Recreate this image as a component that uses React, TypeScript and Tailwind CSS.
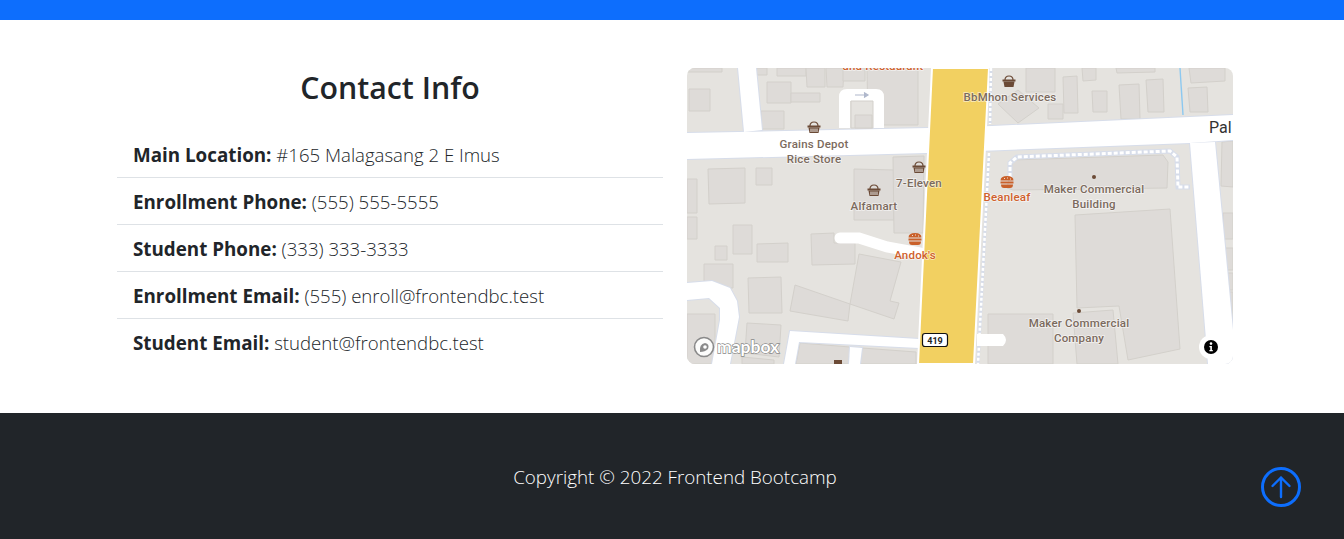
const contactRows = [
  { label: 'Main Location:', value: '#165 Malagasang 2 E Imus' },
  { label: 'Enrollment Phone:', value: '(555) 555-5555' },
  { label: 'Student Phone:', value: '(333) 333-3333' },
  { label: 'Enrollment Email:', value: '(555) enroll@frontendbc.test' },
  { label: 'Student Email:', value: 'student@frontendbc.test' },
];

// building footprints, in map pixels
const buildings = [
  '0,0 35,0 35,4 0,4', '2,21 23,21 23,43 2,43', '74,43 97,43 97,61 74,61', '80,14 104,14 104,35 80,35',
  '104,25 133,25 133,34 104,34', '69,0 80,0 80,7 70,7', '90,0 119,0 119,8 90,8', '119,0 138,0 138,19 120,19',
  '139,0 157,0 156,19 140,19', '156,0 178,0 178,13 156,13', '180,0 231,0 231,57 181,57',
  '21,101 58,100 58,135 22,136', '69,100 85,100 85,117 69,117', '0,111 10,111 10,145 0,145', '167,101 207,102 207,152 167,152',
  '206,89 237,88 236,165 207,165', '0,149 10,149 10,171 0,171', '46,157 65,157 65,186 46,186', '28,178 40,178 40,192 28,192',
  '70,176 101,175 101,194 70,194', '17,196 46,196 46,220 17,220', '61,210 94,209 95,245 62,245',
  '124,166 147,165 147,175 168,175 168,196 125,197', '172,186 214,194 203,233 212,235 207,251 163,236',
  '108,217 163,236 161,253 103,243', '0,246 28,246 28,296 0,296', '60,255 94,257 92,289 58,285', '55,289 87,292 87,296 55,296',
  '113,275 163,279 162,296 109,296', '175,280 229,284 229,296 173,296', '339,0 368,0 368,24 339,24', '376,9 390,8 391,45 377,45',
  '361,36 376,36 376,51 361,51', '405,23 420,23 420,44 406,44', '395,0 409,0 409,12 396,13', '429,0 468,0 468,4 430,5',
  '432,17 452,16 453,51 434,51', '459,12 476,11 477,44 461,44', '501,20 520,19 521,44 503,44', '502,0 538,0 538,13 504,15',
  '311,36 331,22 352,40 331,55', '326,92 476,87 481,94 480,120 326,122 320,120',
  '388,147 483,141 493,281 441,292 432,238 390,240', '301,246 366,246 366,296 301,296', '386,245 426,242 431,296 390,296',
  '535,74 546,73 546,119 534,118', '536,145 546,145 546,171 536,171', '538,180 546,180 546,202 538,202',
  '540,205 546,205 546,222 540,222', '542,224 546,224 546,257 542,257',
];

// road surfaces, in map pixels
const roads = [
  '51,0 69,0 75,62 57,64',
  '0,65 241,60 305,58 546,47 546,72 503,75 240,85 0,91',
  '503,75 528,74 546,262 546,296 521,296',
  '0,215 25,213 43,220 50,233 52,249 43,296 25,296 33,252 33,240 22,230 0,232',
  '97,296 103,263 232,271 232,280 112,274 108,296',
  '163,279 175,280 173,296 162,296',
];

const baskets: [number, number][] = [[127, 60], [232, 100], [187, 123]];
const burgers: [number, number][] = [[320, 114], [228, 171]];
const dots: [number, number][] = [[407, 109], [392, 243]];

const labels: [string, number, number, string][] = [
  ['and Restaurant', 196, 2, '#d0602c'],
  ['Grains Depot', 127, 80, '#7b6a5d'],
  ['Rice Store', 127, 95, '#7b6a5d'],
  ['7-Eleven', 232, 119, '#7b6a5d'],
  ['Alfamart', 187, 142, '#7b6a5d'],
  ['BbMhon Services', 323, 33, '#7b6a5d'],
  ['Beanleaf', 320, 133, '#d0602c'],
  ["Andok's", 228, 191, '#d0602c'],
  ['Maker Commercial', 407, 125, '#7b6a5d'],
  ['Building', 407, 140, '#7b6a5d'],
  ['Maker Commercial', 392, 259, '#7b6a5d'],
  ['Company', 392, 274, '#7b6a5d'],
];

function Basket({ x, y, solid }: { x: number; y: number; solid?: boolean }) {
  return (
    <g transform={`translate(${x} ${y})`}>
      <path d="M-4 -2 Q-4 -6 0 -6 Q4 -6 4 -2" fill="none" stroke="#6b4a36" strokeWidth="1.2" />
      <path d="M-6.5 -2.5 H6.5 V-0.5 H-6.5 Z" fill="#6b4a36" />
      <path d="M-5.5 -0.5 H5.5 L4.5 5 H-4.5 Z" fill="#6b4a36" />
      {!solid && <path d="M-3 0.5 V4 M-1 0.5 V4 M1 0.5 V4 M3 0.5 V4" stroke="#fff" strokeWidth="0.9" />}
    </g>
  );
}

function Burger({ x, y }: { x: number; y: number }) {
  return (
    <g transform={`translate(${x} ${y})`}>
      <path d="M-6.5 -1.5 Q-6.5 -6 0 -6 Q6.5 -6 6.5 -1.5 Z" fill="#c9602a" />
      <path d="M-6.5 -0.5 H6.5 V1.5 H-6.5 Z" fill="#c9602a" />
      <path d="M-6 2.5 H6 Q6 6 3 6 H-3 Q-6 6 -6 2.5 Z" fill="#c9602a" />
      <path d="M-3 -3.5 H-2 M0 -4 H1 M3 -3 H4" stroke="#fff" strokeWidth="0.8" />
    </g>
  );
}

function MapView() {
  return (
    <svg viewBox="0 0 546 296" className="block h-[296px] w-full rounded-lg">
      <rect width="546" height="296" fill="#e5e3df" />
      {buildings.map(points => (
        <polygon key={points} points={points} fill="#dedbd8" stroke="#d3d0cb" strokeWidth="1" />
      ))}
      {/* road casing first, surfaces on top so junctions stay clean */}
      {roads.map(points => (
        <polygon key={points} points={points} fill="#d7ddea" stroke="#d7ddea" strokeWidth="2" />
      ))}
      {roads.map(points => (
        <polygon key={`s-${points}`} points={points} fill="#fff" />
      ))}
      <path d="M152 60 V29 Q152 21 160 21 H189 Q197 21 197 29 V60 H186 V33 H163 V60 Z" fill="#fff" />
      <polygon points="164,33 186,33 186,60 164,60" fill="#e5e3df" stroke="#d3d0cb" />
      <polygon points="168,47 185,47 185,60 168,60" fill="#dedbd8" stroke="#d3d0cb" />
      <path d="M168 27 H179 M177 24.5 L181 27 L177 29.5" fill="#b0b8cc" stroke="#b0b8cc" strokeWidth="1.2" />
      <path d="M153 170 H172 L200 179 L233 185" fill="none" stroke="#fff" strokeWidth="11" strokeLinecap="round" />
      {/* footpath */}
      <path d="M323 109 V95 L330 89 L483 83 L490 89 L491 119 H503" fill="none" stroke="#d7ddea" strokeWidth="5" />
      <path d="M323 109 V95 L330 89 L483 83 L490 89 L491 119 H503" fill="none" stroke="#fff" strokeWidth="3" strokeDasharray="4 2" />
      <path d="M493 0 L496 47" stroke="#8cc8f0" strokeWidth="1.4" />
      {/* highway */}
      <polygon points="245,0 302,0 287,296 231,296" fill="#f2d061" stroke="#fff" strokeWidth="2" />
      <path d="M304 0 L303 56 M302 85 L291 296" stroke="#d7ddea" strokeWidth="3" />
      <path d="M304 0 L303 56 M302 85 L291 296" stroke="#fff" strokeWidth="2.5" strokeDasharray="3 2" />
      <path d="M290 266 H316 Q322 272 316 278 H290 Z" fill="#fff" />
      <rect x="235.5" y="265.5" width="25" height="13" rx="2.5" fill="#fff" stroke="#111" strokeWidth="1.2" />
      <text x="248" y="275.5" textAnchor="middle" fontSize="9" fontWeight="700" fill="#222" fontFamily="Roboto, sans-serif">419</text>
      {baskets.map(([x, y]) => <Basket key={x} x={x} y={y} />)}
      <Basket x={322} y={14} solid />
      {burgers.map(([x, y]) => <Burger key={x} x={x} y={y} />)}
      {dots.map(([x, y]) => <circle key={x} cx={x} cy={y} r="2" fill="#6b4a36" />)}
      <rect x="147" y="292" width="8" height="4" fill="#6b4a36" />
      {labels.map(([text, x, y, color]) => (
        <text
          key={`${text}-${x}`}
          x={x}
          y={y}
          textAnchor="middle"
          fontSize="11.5"
          fontWeight="500"
          letterSpacing="0.2"
          fill={color}
          stroke="#fff"
          strokeOpacity="0.6"
          strokeWidth="1.5"
          paintOrder="stroke"
          fontFamily="Roboto, sans-serif"
        >
          {text}
        </text>
      ))}
      <text x="522" y="65" fontSize="16" fill="#333" fontFamily="Roboto, sans-serif" stroke="#fff" strokeWidth="1.5" paintOrder="stroke">Pal</text>
      {/* mapbox mark */}
      <circle cx="17" cy="279" r="9.5" fill="#fff" fillOpacity="0.9" stroke="#8a8a8a" strokeWidth="1.6" />
      <path d="M13 284 Q12 276 18 275 Q23 276 21 281 Q18 284 13 284 Z" fill="#8a8a8a" />
      <circle cx="18" cy="279" r="1.8" fill="#fff" />
      <text x="30" y="285" fontSize="17.5" fontWeight="700" fill="#fff" stroke="#8a8a8a" strokeWidth="1.4" paintOrder="stroke" fontFamily="Lato, sans-serif">mapbox</text>
      {/* attribution button */}
      <circle cx="524" cy="279" r="12" fill="#fff" />
      <circle cx="524" cy="279" r="7" fill="#000" />
      <circle cx="524" cy="275.6" r="1.3" fill="#fff" />
      <path d="M522.4 278 H524.9 V282 H525.8 V283.2 H522.4 V282 H523.3 V279.2 H522.4 Z" fill="#fff" />
    </svg>
  );
}

export default function App() {
  return (
    <div className="relative h-[539px] overflow-hidden bg-white font-['Open_Sans',sans-serif] text-[#212529]">
      <div className="h-5 bg-[#0d6efd]" />

      <section className="ml-[117px] flex w-[1116px] gap-6 pb-12 pt-12">
        <div className="w-[546px]">
          <h2 className="mb-[23px] text-center text-[30.3px] font-semibold leading-10">Contact Info</h2>
          <ul>
            {contactRows.map((row, i) => (
              <li
                key={row.label}
                className={`px-4 pb-[7px] pt-[9px] text-[18.6px] font-light leading-[30px] ${i < contactRows.length - 1 ? 'border-b border-[#dee2e6]' : ''}`}
              >
                <strong className="text-[18.8px] font-bold">{row.label}</strong> {row.value}
              </li>
            ))}
          </ul>
        </div>
        <div className="w-[546px]">
          <MapView />
        </div>
      </section>

      <footer className="flex h-[126px] w-[1350px] items-center justify-center bg-[#212529] pt-[2px]">
        <p className="text-[18.8px] font-[350] text-white">Copyright © 2022 Frontend Bootcamp</p>
      </footer>

      <svg viewBox="0 0 40 40" className="absolute left-[1261px] top-[467px] h-10 w-10 text-[#0d6efd]" fill="none" stroke="currentColor">
        <circle cx="20" cy="20" r="18.5" strokeWidth="3" />
        <path d="M20 30 V10.5 M11.5 19 L20 10.5 L28.5 19" strokeWidth="2.4" strokeLinecap="round" strokeLinejoin="round" />
      </svg>
    </div>
  );
}
